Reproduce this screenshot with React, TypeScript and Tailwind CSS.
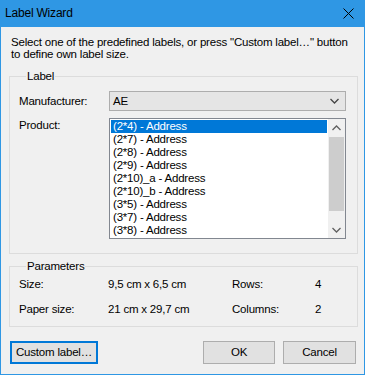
import { useState } from 'react'

const products = [
  '(2*4) - Address',
  '(2*7) - Address',
  '(2*8) - Address',
  '(2*9) - Address',
  '(2*10)_a - Address',
  '(2*10)_b - Address',
  '(3*5) - Address',
  '(3*7) - Address',
  '(3*8) - Address',
]

function Chevron({ up = false, className = '' }: { up?: boolean; className?: string }) {
  return (
    <svg width="9" height="6" viewBox="0 0 9 6" className={className}>
      <path
        d={up ? 'M0.5 5 L4.5 1 L8.5 5' : 'M0.5 1 L4.5 5 L8.5 1'}
        fill="none"
        stroke="currentColor"
        strokeWidth="1.3"
      />
    </svg>
  )
}

function Button({ children, focused = false, className = '' }: { children: React.ReactNode; focused?: boolean; className?: string }) {
  return (
    <button
      className={`h-[23px] bg-[#e1e1e1] leading-[13px] text-black ${
        focused ? 'border-2 border-[#0078d7]' : 'border border-[#adadad]'
      } ${className}`}
    >
      {children}
    </button>
  )
}

export default function App() {
  const [selected, setSelected] = useState(0)

  return (
    <div className="w-[365px] h-[375px] flex flex-col bg-[#2f97e4] px-px pb-px font-['Liberation_Sans',Arial,sans-serif] text-[11.5px] tracking-[-0.2px] leading-[13px] text-black">
      {/* title bar */}
      <div className="h-[27px] shrink-0 flex items-center justify-between pl-[4px] pr-[10px]">
        <span className="text-[12px]">Label Wizard</span>
        <svg width="11" height="11" viewBox="0 0 11 11">
          <path d="M0.5 0.5 L10.5 10.5 M10.5 0.5 L0.5 10.5" stroke="#000" strokeWidth="1" />
        </svg>
      </div>

      <div className="flex-1 flex flex-col bg-[#f0f0f0] pl-[8px] pr-[6px] pt-[9px]">
        <p className="pl-[2px] h-[26px] whitespace-nowrap leading-[12px]">
          Select one of the predefined labels, or press "Custom label…" button
          <br />
          to define own label size.
        </p>

        <fieldset className="mt-[8px] border border-[#dcdcdc] pl-[9px] pr-[11px] pb-[14px]">
          <legend className="ml-[7px] px-[1px] leading-[13px]">Label</legend>
          <div className="flex items-center pt-[8px]">
            <span className="w-[90px]">Manufacturer:</span>
            <div className="w-[237px] h-[20px] flex items-center justify-between bg-[#e5e5e5] border border-[#adadad] pl-[3px] pr-[6px]">
              <span>AE</span>
              <Chevron className="text-[#444]" />
            </div>
          </div>
          <div className="flex mt-[7px]">
            <span className="w-[90px] pt-[1px]">Product:</span>
            <div className="w-[237px] h-[121px] flex bg-white border border-[#828790]">
              <ul className="flex-1 p-px">
                {products.map((p, i) => (
                  <li
                    key={p}
                    onClick={() => setSelected(i)}
                    className={`h-[13px] pl-[2px] whitespace-nowrap leading-[13px] ${
                      i === selected ? 'bg-[#0078d7] text-white' : ''
                    }`}
                  >
                    {p}
                  </li>
                ))}
              </ul>
              <div className="w-[17px] flex flex-col bg-[#f0f0f0]">
                <div className="h-[17px] flex items-center justify-center text-[#606060]">
                  <Chevron up />
                </div>
                <div className="flex-1 px-px pt-px">
                  <div className="h-[74px] bg-[#cdcdcd]" />
                </div>
                <div className="h-[17px] flex items-center justify-center text-[#606060]">
                  <Chevron />
                </div>
              </div>
            </div>
          </div>
        </fieldset>

        <fieldset className="mt-[6px] border border-[#dcdcdc] pl-[9px] pr-[11px] pt-[5px] pb-[10px]">
          <legend className="ml-[7px] px-[1px] leading-[13px]">Parameters</legend>
          <div className="grid grid-cols-[89px_124px_83px_auto] gap-y-[12px]">
            <span>Size:</span>
            <span>9,5 cm x 6,5 cm</span>
            <span>Rows:</span>
            <span>4</span>
            <span>Paper size:</span>
            <span>21 cm x 29,7 cm</span>
            <span>Columns:</span>
            <span>2</span>
          </div>
        </fieldset>

        <div className="flex items-center mt-[14px] pl-px pr-[2px]">
          <Button focused className="w-[88px]">Custom label…</Button>
          <div className="flex-1" />
          <Button className="w-[72px]">OK</Button>
          <Button className="w-[73px] ml-[8px]">Cancel</Button>
        </div>
      </div>
    </div>
  )
}
